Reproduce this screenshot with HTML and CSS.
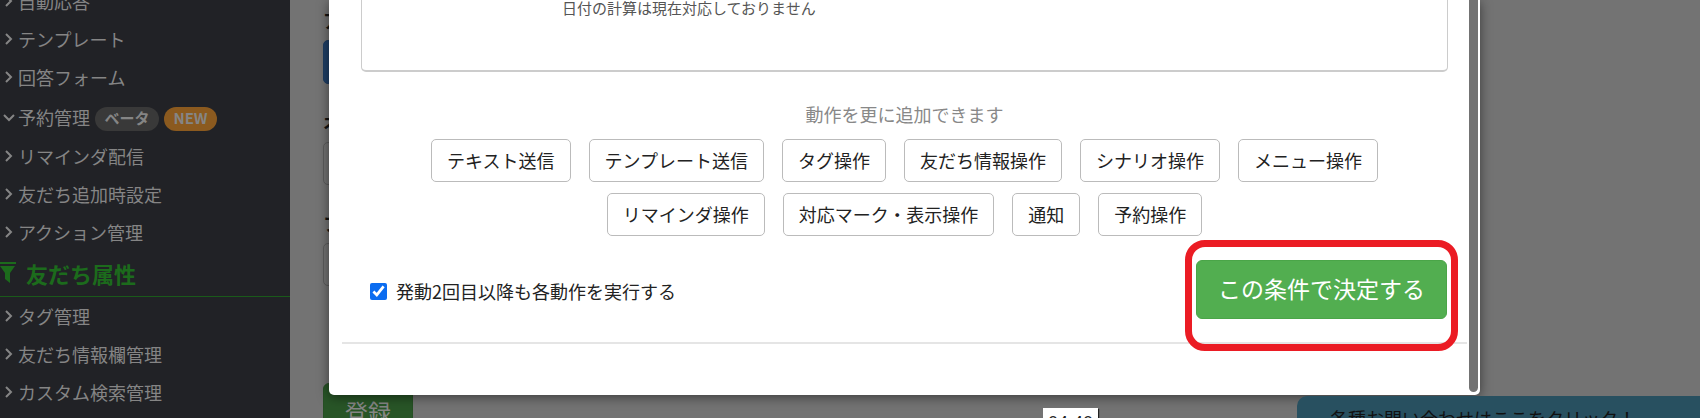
FILE: index.html
```
<!DOCTYPE html>
<html lang="ja">
<head>
    <meta charset="UTF-8">
    <meta name="viewport" content="width=device-width, initial-scale=1.0">
    <title>アクション設定</title>
    <link rel="stylesheet" href="styles.css">
</head>
<body>
    <div class="page">
        <nav class="sidebar">
            <ul class="menu menu-top">
                <li><a href="#"><svg class="chevron" viewBox="0 0 12 12"><path d="M3 1l5 5-5 5"/></svg>自動応答</a></li>
                <li><a href="#"><svg class="chevron" viewBox="0 0 12 12"><path d="M3 1l5 5-5 5"/></svg>テンプレート</a></li>
                <li><a href="#"><svg class="chevron" viewBox="0 0 12 12"><path d="M3 1l5 5-5 5"/></svg>回答フォーム</a></li>
                <li class="open">
                    <a href="#"><svg class="chevron" viewBox="0 0 12 12"><path d="M1 4l5 5 5-5"/></svg>予約管理</a>
                    <span class="badge badge-beta">ベータ</span>
                    <span class="badge badge-new">NEW</span>
                </li>
                <li><a href="#"><svg class="chevron" viewBox="0 0 12 12"><path d="M3 1l5 5-5 5"/></svg>リマインダ配信</a></li>
                <li><a href="#"><svg class="chevron" viewBox="0 0 12 12"><path d="M3 1l5 5-5 5"/></svg>友だち追加時設定</a></li>
                <li><a href="#"><svg class="chevron" viewBox="0 0 12 12"><path d="M3 1l5 5-5 5"/></svg>アクション管理</a></li>
            </ul>
            <h2 class="section-title">
                <svg class="filter-icon" viewBox="0 0 16 21"><path d="M0 0h16v2H0zM0 4h15l-5 7v10l-5-4v-6L0 4z"/></svg>友だち属性
            </h2>
            <ul class="menu">
                <li><a href="#"><svg class="chevron" viewBox="0 0 12 12"><path d="M3 1l5 5-5 5"/></svg>タグ管理</a></li>
                <li><a href="#"><svg class="chevron" viewBox="0 0 12 12"><path d="M3 1l5 5-5 5"/></svg>友だち情報欄管理</a></li>
                <li><a href="#"><svg class="chevron" viewBox="0 0 12 12"><path d="M3 1l5 5-5 5"/></svg>カスタム検索管理</a></li>
            </ul>
        </nav>

        <main class="content">
            <form class="form">
                <span class="label">ア</span>
                <button type="button" class="btn-blue" aria-label="アクション"></button>
                <label class="label" for="option">オ</label>
                <input type="text" id="option">
                <label class="label" for="folder">フ</label>
                <input type="text" id="folder">
                <button type="button" class="btn-submit">登録</button>
            </form>
        </main>
    </div>

    <div class="modal">
        <div class="modal-body">
            <div class="panel">
                <p>日付の計算は現在対応しておりません</p>
            </div>
            <p class="hint">動作を更に追加できます</p>
            <div class="actions">
                <button type="button">テキスト送信</button>
                <button type="button">テンプレート送信</button>
                <button type="button">タグ操作</button>
                <button type="button">友だち情報操作</button>
                <button type="button">シナリオ操作</button>
                <button type="button">メニュー操作</button>
                <button type="button">リマインダ操作</button>
                <button type="button">対応マーク・表示操作</button>
                <button type="button">通知</button>
                <button type="button">予約操作</button>
            </div>
            <div class="confirm">
                <label class="repeat"><input type="checkbox" checked>発動2回目以降も各動作を実行する</label>
                <div class="decide">
                    <button type="button">この条件で決定する</button>
                </div>
            </div>
        </div>
        <div class="scrollbar"></div>
    </div>

    <div class="time">04:40</div>
    <a class="contact" href="#">各種お問い合わせはここをクリック！</a>
</body>
</html>
```

FILE: styles.css
```
* {
    margin: 0;
    padding: 0;
    box-sizing: border-box;
}

body {
    position: relative;
    height: 100vh;
    overflow: hidden;
    background: #737373;
    color: #222;
    font-family: "Noto Sans CJK JP", sans-serif;
    font-size: 18px;
    line-height: 26px;
}

button,
input {
    font: inherit;
}

.page {
    display: flex;
    height: 100%;
    overflow: hidden;
}

/* sidebar */
.sidebar {
    flex: 0 0 290px;
    background: #212226;
}

.menu {
    list-style: none;
}

/* the list is scrolled half a row */
.menu-top {
    margin-top: -18px;
}

.menu li {
    display: flex;
    align-items: center;
    height: 38px;
}

.menu li.open {
    height: 41px;
}

.menu a {
    display: flex;
    align-items: center;
    gap: 3px;
    padding-left: 3px;
    color: #858585;
    text-decoration: none;
}

.chevron {
    width: 12px;
    height: 12px;
    fill: none;
    stroke: #858585;
    stroke-width: 2;
}

.badge {
    height: 24px;
    margin: 4px 0 0 5px;
    border-radius: 12px;
    color: #858585;
    font-size: 15px;
    font-weight: bold;
    line-height: 22px;
    text-align: center;
}

.badge-beta {
    width: 64px;
    background: #393939;
}

.badge-new {
    width: 53px;
    background: #8b5a1f;
}

.section-title {
    display: flex;
    align-items: center;
    gap: 10px;
    height: 46px;
    padding-bottom: 2px;
    border-bottom: 1px solid #1a5a1a;
    color: #1c6b1c;
    font-size: 22px;
}

.filter-icon {
    width: 16px;
    height: 21px;
    fill: #1c6b1c;
}

/* page behind the dialog */
.content {
    flex: 1;
    padding: 7px 33px;
}

.form {
    display: flex;
    flex-direction: column;
    align-items: flex-start;
}

.label {
    margin-bottom: 7px;
    color: #111;
    font-weight: bold;
}

.btn-blue {
    width: 120px;
    height: 44px;
    margin-bottom: 25px;
    border: 1px solid #1d3b5f;
    border-radius: 5px;
    background: #1f3f66;
}

.form input {
    width: 50%;
    height: 43px;
    margin-bottom: 25px;
    border: 1px solid #5c5c5c;
    border-radius: 5px;
    background: #737373;
}

.btn-submit {
    height: 56px;
    margin-top: 72px;
    padding: 0 21px;
    border: 1px solid #264f24;
    border-radius: 6px;
    background: #285527;
    color: #858585;
    font-size: 23px;
    line-height: 50px;
}

/* dialog */
.modal {
    position: absolute;
    top: 0;
    left: 329px;
    right: 220px;
    display: flex;
    padding-right: 2px;
    border-radius: 0 0 5px 5px;
    background: #fff;
    box-shadow: 0 2px 12px rgba(0, 0, 0, 0.5);
}

.modal-body {
    flex: 1;
    padding: 0 2px 51px 13px;
}

.panel {
    height: 72px;
    margin: 0 19px;
    padding-left: 200px;
    border: 1px solid #ccc;
    border-top: none;
    border-bottom-width: 2px;
    border-radius: 0 0 5px 5px;
    color: #555;
    font-size: 15px;
    line-height: 15px;
}

.hint {
    padding: 29px 0 12px;
    color: #888;
    text-align: center;
}

.actions {
    display: flex;
    flex-wrap: wrap;
    justify-content: center;
    gap: 11px 18px;
    margin: 0 19px;
}

.actions button {
    height: 43px;
    padding: 0 15px 2px;
    border: 1px solid #bbb;
    border-radius: 5px;
    background: #fff;
    color: #222;
}

.confirm {
    display: flex;
    align-items: flex-start;
    justify-content: space-between;
    height: 108px;
    padding: 4px 9px 0 28px;
    border-bottom: 2px solid #e5e5e5;
}

.repeat {
    display: flex;
    align-items: center;
    gap: 9px;
    margin-top: 38px;
}

.repeat input {
    width: 17px;
    height: 17px;
    accent-color: #0b6cf0;
}

/* marks out the main button */
.decide {
    position: relative;
    height: 111px;
    padding: 13px 4px;
    border: 7px solid #eb1c24;
    border-radius: 20px;
}

.decide button {
    height: 59px;
    padding: 0 21px 4px;
    border: 1px solid #4aa548;
    border-radius: 6px;
    background: #52ae50;
    color: #fff;
    font-size: 23px;
}

.scrollbar {
    width: 9px;
    margin-bottom: 3px;
    border-radius: 0 0 5px 5px;
    background: #737373;
}

/* bits that float over the page */
.time {
    position: absolute;
    top: 408px;
    left: 1043px;
    width: 55px;
    padding-top: 2px;
    background: #fff;
    box-shadow: 1px 1px 1px #222;
    color: #222;
    font-family: "Liberation Sans", sans-serif;
    text-align: center;
}

.contact {
    position: absolute;
    top: 396px;
    left: 1297px;
    right: 0;
    padding: 9px 33px;
    border-radius: 10px 0 0 0;
    background: #285060;
    color: #111;
    text-decoration: none;
}
```
